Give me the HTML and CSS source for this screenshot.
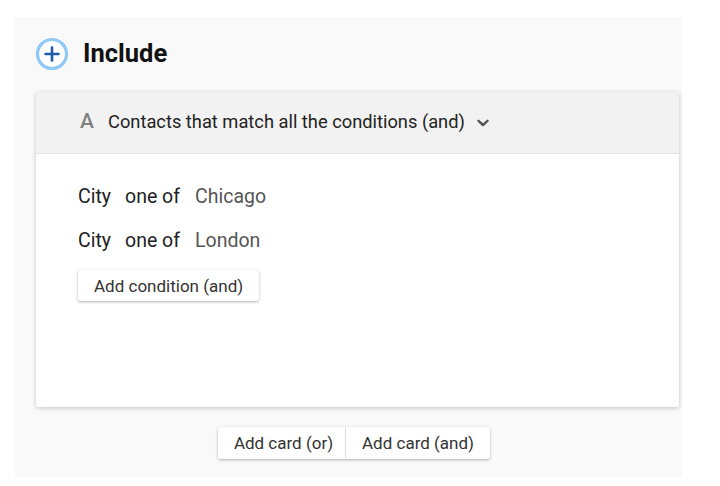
FILE: index.html
```html
<!DOCTYPE html>
<html>
<head>
<meta charset="utf-8">
<link rel="stylesheet" href="styles.css">
</head>
<body>
<div class="panel">
  <div class="title-row">
    <span class="plus-icon">
      <svg width="34" height="34" viewBox="0 0 34 34">
        <circle cx="17" cy="17" r="14.5" fill="#fff" stroke="#90c8f6" stroke-width="3.2"/>
        <path d="M17 10.5v13M10.5 17h13" stroke="#1e5aa8" stroke-width="2.6" stroke-linecap="round"/>
      </svg>
    </span>
    <h1 class="title">Include</h1>
  </div>
  <div class="card">
    <div class="card-header">
      <span class="letter">A</span>
      <span class="header-text">Contacts that match all the conditions (and)</span>
      <svg class="chevron" width="14" height="10" viewBox="0 0 14 10">
        <path d="M2.5 2.8l4.5 4.2 4.5-4.2" fill="none" stroke="#555" stroke-width="2.4" stroke-linecap="round" stroke-linejoin="round"/>
      </svg>
    </div>
    <div class="card-body">
      <div class="cond"><span class="field">City</span><span class="op">one of</span><span class="val">Chicago</span></div>
      <div class="cond"><span class="field">City</span><span class="op">one of</span><span class="val">London</span></div>
      <button class="btn">Add condition (and)</button>
    </div>
  </div>
  <div class="actions">
    <div class="btn-group">
      <button class="btn grp">Add card (or)</button>
      <button class="btn grp">Add card (and)</button>
    </div>
  </div>
</div>
</body>
</html>
```

FILE: styles.css
```css
html, body {
  margin: 0;
  padding: 0;
  background: #ffffff;
  font-family: Roboto, "Liberation Sans", sans-serif;
}
.panel {
  margin: 17px 0 0 15px;
  width: 667px;
  height: 460px;
  background: #f9f9f9;
  padding: 0 3px 0 21px;
  box-sizing: border-box;
  display: flex;
  flex-direction: column;
}
.title-row {
  height: 75px;
  display: flex;
  align-items: center;
}
.plus-icon {
  display: flex;
  margin-right: 14px;
  margin-top: -2px;
  margin-left: -1px;
}
.title {
  margin: 0;
  font-size: 25.5px;
  font-weight: 700;
  color: #111;
  margin-top: -4px;
}
.card {
  height: 315px;
  background: #fff;
  box-shadow: 0 1px 4px rgba(0,0,0,0.22);
  border-radius: 2px;
  display: flex;
  flex-direction: column;
}
.card-header {
  height: 61px;
  background: #f2f2f2;
  border-bottom: 1px solid #e4e4e4;
  display: flex;
  align-items: center;
  padding-left: 44px;
}
.letter {
  font-size: 21px;
  color: #808080;
  font-weight: 500;
  width: 28px;
  margin-top: -3px;
}
.header-text {
  font-size: 18.3px;
  color: #222;
  margin-top: -3px;
}
.chevron {
  margin-left: 11px;
  margin-top: 1px;
}
.card-body {
  padding: 23px 0 0 42px;
  display: flex;
  flex-direction: column;
  align-items: flex-start;
}
.cond {
  font-size: 19.5px;
  height: 44px;
  line-height: 40px;
  color: #222;
  display: flex;
}
.field { margin-right: 14px; }
.op { margin-right: 15px; }
.val { color: #555; }
.btn {
  font-family: Roboto, "Liberation Sans", sans-serif;
  font-size: 17px;
  color: #333;
  background: #fff;
  border: none;
  border-radius: 3px;
  box-shadow: 0 1px 3px rgba(0,0,0,0.3);
  height: 31px;
  padding: 0 16px;
  margin-top: 5px;
}
.actions {
  display: flex;
  justify-content: center;
  padding-top: 20px;
  padding-right: 7px;
}
.btn-group {
  display: flex;
  border-radius: 3px;
  box-shadow: 0 1px 3px rgba(0,0,0,0.3);
}
.btn.grp {
  box-shadow: none;
  margin: 0;
  height: 32px;
  padding: 0;
  border-radius: 0;
}
.btn.grp:first-child {
  border-radius: 3px 0 0 3px;
  border-right: 1px solid #ddd;
  width: 128px;
  padding-left: 4px;
}
.btn.grp:last-child {
  border-radius: 0 3px 3px 0;
  width: 144px;
}
```
